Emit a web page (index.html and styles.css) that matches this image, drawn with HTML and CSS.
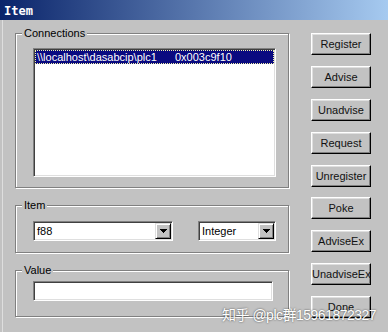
FILE: index.html
```html
<!DOCTYPE html>
<html lang="en">
<head>
    <meta charset="UTF-8">
    <meta name="viewport" content="width=device-width, initial-scale=1.0">
    <title>Item</title>
    <link rel="stylesheet" href="styles.css">
</head>
<body>
    <div class="window">
        <div class="titlebar"><span class="title">Item</span></div>
        <div class="client">
            <div class="groups">
                <div class="group group-conn">
                    <span class="group-label">Connections</span>
                    <div class="listbox">
                        <div class="list-row selected"><span class="col-path">\\localhost\dasabcip\plc1</span><span>0x003c9f10</span></div>
                    </div>
                </div>
                <div class="group group-item">
                    <span class="group-label">Item</span>
                    <div class="item-row">
                        <div class="combo combo-item">
                            <span class="combo-text">f88</span>
                            <span class="combo-btn"><svg width="7" height="4" viewBox="0 0 7 4"><path d="M0 0h7v1h-1v1h-1v1h-1v1h-1v-1h-1v-1h-1v-1h-1z" fill="#000"/></svg></span>
                        </div>
                        <div class="combo combo-type">
                            <span class="combo-text">Integer</span>
                            <span class="combo-btn"><svg width="7" height="4" viewBox="0 0 7 4"><path d="M0 0h7v1h-1v1h-1v1h-1v1h-1v-1h-1v-1h-1v-1h-1z" fill="#000"/></svg></span>
                        </div>
                    </div>
                </div>
                <div class="group group-value">
                    <span class="group-label">Value</span>
                    <div class="edit"></div>
                </div>
            </div>
            <div class="buttons">
                <button>Register</button>
                <button>Advise</button>
                <button>Unadvise</button>
                <button>Request</button>
                <button>Unregister</button>
                <button>Poke</button>
                <button>AdviseEx</button>
                <button>UnadviseEx</button>
                <button>Done</button>
            </div>
        </div>
        <div class="watermark">知乎 @plc群15961872327</div>
    </div>
</body>
</html>
```

FILE: styles.css
```css
body {
    margin: 0;
    background: #c2c2c2;
    font-family: "Liberation Sans", Arial, sans-serif;
    font-size: 11px;
    color: #000;
}

.window {
    position: relative;
    width: 388px;
    height: 332px;
    overflow: hidden;
    background: #c2c2c2;
    box-shadow: inset 2px 0 #c2c2c2, inset 3px 0 #dedede;
}

/*
 * TITLE BAR
 */
.titlebar {
    height: 20px;
    padding-left: 4px;
    background: linear-gradient(to right, #0a246a, #a6caf0);
    overflow: hidden;
}
.title {
    font-family: "DejaVu Sans Mono", monospace;
    font-weight: bold;
    font-size: 12px;
    line-height: 22px;
    color: #fff;
}

/*
 * CLIENT AREA
 */
.client {
    display: flex;
    gap: 22px;
    padding: 13px 17px 0 15px;
}
.groups {
    width: 274px;
    display: flex;
    flex-direction: column;
    gap: 17px;
}
.group {
    position: relative;
    border: 1px solid #808080;
    box-shadow: inset 1px 1px #fff, 1px 1px #fff;
}
.group-label {
    position: absolute;
    top: -7px;
    left: 6px;
    padding: 0 2px;
    line-height: 13px;
    background: #c2c2c2;
}
.group-conn {
    padding: 14px 12px 10px 17px;
}
.group-item {
    padding: 15px 12px 11px 17px;
}
.group-value {
    padding: 10px 15px 15px 17px;
}

/* sunken controls */
.listbox,
.combo,
.edit {
    box-sizing: border-box;
    background: #fff;
    border: 1px solid;
    border-color: #808080 #fff #fff #808080;
    box-shadow: inset 1px 1px #404040, inset -1px -1px #dfdfdf;
}
.listbox {
    width: 243px;
    height: 129px;
    padding: 1px;
}
.list-row {
    height: 14px;
    line-height: 14px;
    padding-left: 2px;
    color: #fff;
    white-space: nowrap;
}
.list-row.selected {
    background: #0a0a80;
    outline: 1px dotted #f4f4a8;
    outline-offset: -1px;
}
.col-path {
    display: inline-block;
    width: 138px;
}

.item-row {
    display: flex;
    justify-content: space-between;
}
.combo {
    height: 20px;
    display: flex;
    align-items: center;
    padding: 1px;
}
.combo-item {
    width: 140px;
}
.combo-type {
    width: 78px;
}
.combo-text {
    flex: 1;
    padding-left: 2px;
    line-height: 16px;
}
.combo-btn {
    box-sizing: border-box;
    width: 16px;
    height: 16px;
    display: flex;
    align-items: center;
    justify-content: center;
    background: #c2c2c2;
    border: 1px solid;
    border-color: #dfdfdf #000 #000 #dfdfdf;
    box-shadow: inset 1px 1px #fff, inset -1px -1px #808080;
}
.edit {
    width: 240px;
    height: 20px;
}

/*
 * BUTTONS
 */
.buttons {
    display: flex;
    flex-direction: column;
    gap: 10.875px;
}
.buttons button {
    width: 60px;
    height: 22px;
    padding: 0;
    background: #c2c2c2;
    border: 1px solid;
    border-color: #fff #000 #000 #fff;
    box-shadow: inset -1px -1px #808080, inset 1px 1px #dfdfdf;
    font-family: "Liberation Sans", Arial, sans-serif;
    font-size: 11px;
    color: #111;
}

.watermark {
    position: absolute;
    left: 222px;
    top: 304px;
    font-family: "Liberation Sans", "Noto Sans CJK SC", sans-serif;
    font-size: 14px;
    letter-spacing: -0.5px;
    color: #fff;
    white-space: nowrap;
    text-shadow: 0 0 2px rgba(0, 0, 0, .7);
}
```
